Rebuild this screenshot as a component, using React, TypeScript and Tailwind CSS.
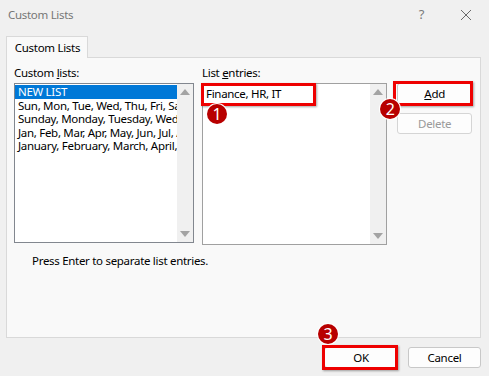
import React from "react";

const font = { fontFamily: '"Noto Sans", "Open Sans", sans-serif' };

const customLists = [
  "NEW LIST",
  "Sun, Mon, Tue, Wed, Thu, Fri, Sat",
  "Sunday, Monday, Tuesday, Wednesday, Thursday, Friday, Saturday",
  "Jan, Feb, Mar, Apr, May, Jun, Jul, Aug, Sep, Oct, Nov, Dec",
  "January, February, March, April, May, June, July",
];

function Badge({ n, className }: { n: string; className: string }) {
  return (
    <span
      className={`absolute z-20 flex h-[20px] w-[20px] items-center justify-center rounded-full bg-[#b80000] text-[16px] leading-none tracking-normal text-white shadow-[0_0_0_1px_#ffffff] ${className}`}
    >
      {n}
    </span>
  );
}

function Highlight({ className }: { className: string }) {
  return (
    <span
      className={`pointer-events-none absolute z-10 border-[3px] border-[#ee0000] shadow-[1px_1px_2px_rgba(0,0,0,0.35)] ${className}`}
    />
  );
}

function ScrollBar() {
  return (
    <div className="flex w-[16px] shrink-0 flex-col items-center justify-between bg-[#f0f0f0] py-[5px]">
      <span className="h-0 w-0 border-x-[5px] border-b-[6px] border-x-transparent border-b-[#a3a3a3]" />
      <span className="h-0 w-0 border-x-[5px] border-t-[6px] border-x-transparent border-t-[#a3a3a3]" />
    </div>
  );
}

function Button({
  children,
  disabled,
  className = "",
}: {
  children: React.ReactNode;
  disabled?: boolean;
  className?: string;
}) {
  return (
    <button
      className={`flex h-[21px] items-center justify-center rounded-[3px] border bg-[#fdfdfd] ${
        disabled ? "border-[#d5d5d5] text-[#9a9a9a]" : "border-[#c8c8c8] text-black"
      } ${className}`}
    >
      {children}
    </button>
  );
}

export default function App() {
  return (
    <div
      className="flex h-[376px] w-[489px] flex-col bg-[#f0f0f0] text-[11.5px] tracking-[-0.3px] text-black"
      style={font}
    >
      {/* title bar */}
      <div className="flex h-[29px] items-center pl-[8px] pr-[17px] text-[#767676]">
        <span className="flex-1">Custom Lists</span>
        <span className="mr-[36px] text-[13px] text-[#7a7a7a]">?</span>
        <svg width="12" height="12" viewBox="0 0 12 12" className="text-[#6a6a6a]">
          <path d="M1 1L11 11M11 1L1 11" stroke="currentColor" strokeWidth="1" />
        </svg>
      </div>

      <div className="flex flex-col pl-[6px] pr-[8px] pt-[7px]">
        {/* tab strip */}
        <div className="flex">
          <div className="relative -mb-px flex h-[22px] w-[82px] items-center justify-center border border-b-0 border-[#d9d9d9] bg-[#f9f9f9] pl-[1px]">
            Custom Lists
          </div>
        </div>

        {/* tab panel */}
        <div className="flex h-[281px] flex-col border border-[#d9d9d9] bg-[#f9f9f9] pl-[7px] pr-[8px] pt-[8px]">
          <div className="flex">
            {/* left column */}
            <div className="flex w-[180px] flex-col">
              <span className="h-[17px] leading-[14px]">
                Custom <u>l</u>ists:
              </span>
              <div className="flex h-[160px] border border-[#82878f] bg-white">
                <div className="flex min-w-0 flex-1 flex-col pt-[1px]">
                  {customLists.map((item, i) => (
                    <div
                      key={item}
                      className={`h-[13.5px] overflow-hidden whitespace-nowrap pl-[3px] leading-[13.5px] ${
                        i === 0 ? "bg-[#0078d7] text-white" : ""
                      }`}
                    >
                      {item}
                    </div>
                  ))}
                </div>
                <ScrollBar />
              </div>
            </div>

            {/* middle column */}
            <div className="ml-[8px] flex w-[186px] flex-col">
              <span className="h-[17px] leading-[14px]">
                List <u>e</u>ntries:
              </span>
              <div className="relative flex h-[162px] border border-[#a0a0a0] bg-white">
                <div className="flex-1 pl-[3px] pt-[1px] leading-[17px]">Finance, HR, IT</div>
                <ScrollBar />
                <Highlight className="-left-[2px] -top-[1px] h-[23px] w-[115px]" />
                <Badge n="1" className="left-[4px] top-[20px]" />
              </div>
            </div>

            {/* buttons */}
            <div className="ml-[10px] flex w-[75px] flex-col gap-[9px] pt-[17px]">
              <div className="relative">
                <Button className="w-full">
                  <u>A</u>dd
                </Button>
                <Highlight className="-left-[4px] -top-[2px] h-[25px] w-[80px]" />
                <Badge n="2" className="-left-[17px] top-[16px]" />
              </div>
              <Button disabled className="w-full">
                Delete
              </Button>
            </div>
          </div>

          <div className="pl-[18px] pt-[7px]">Press Enter to separate list entries.</div>
        </div>

        {/* bottom buttons */}
        <div className="flex justify-end gap-[10px] pt-[9px]">
          <div className="relative">
            <Button className="w-[74px]">OK</Button>
            <Highlight className="-left-[2px] -top-[2px] h-[25px] w-[76px]" />
            <Badge n="3" className="-left-[6px] -top-[23px]" />
          </div>
          <Button className="w-[73px]">Cancel</Button>
        </div>
      </div>
    </div>
  );
}
